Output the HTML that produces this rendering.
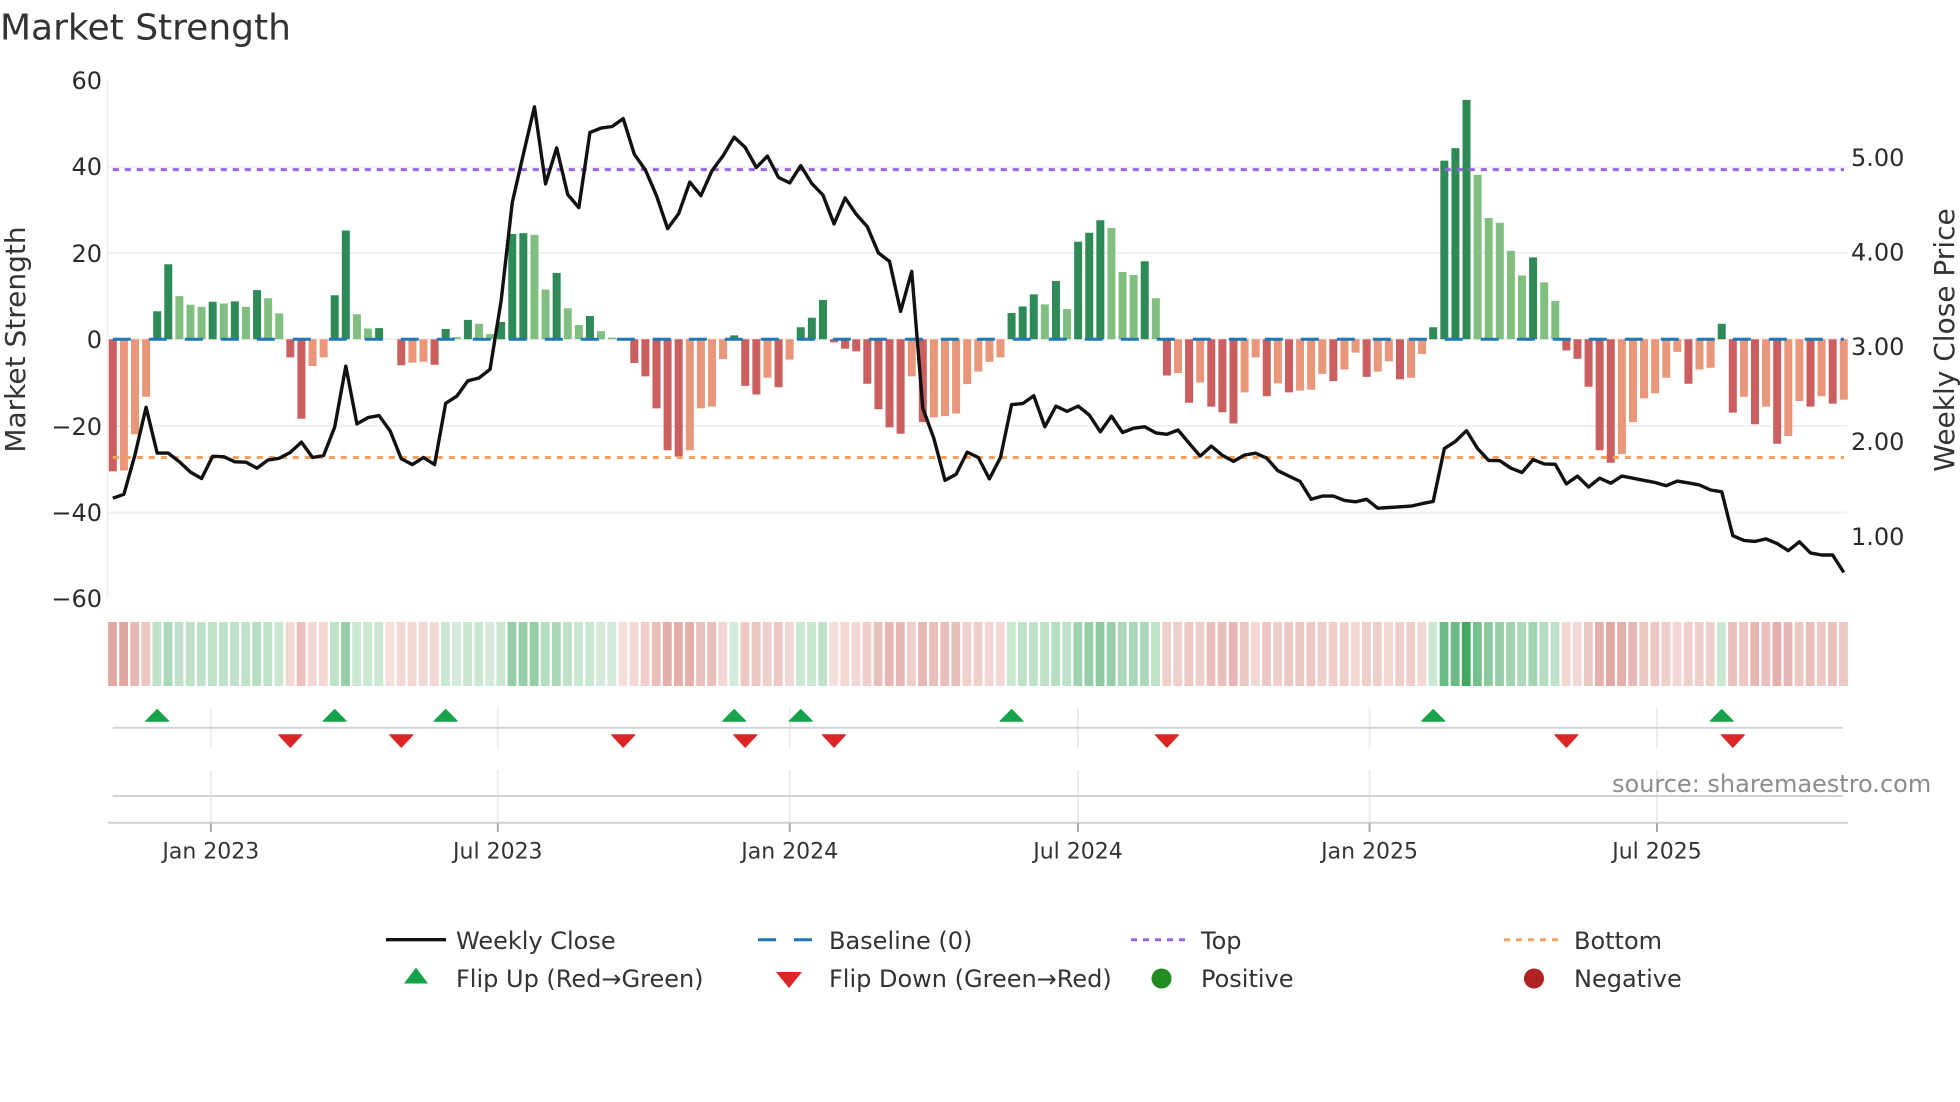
<!DOCTYPE html>
<html lang="en">
<head>
<meta charset="utf-8">
<title>Market Strength</title>
<style>
html,body{margin:0;padding:0;background:#fff;width:1960px;height:1102px;overflow:hidden}
svg{display:block}
text{font-family:"DejaVu Sans","Liberation Sans",sans-serif}
.n{vector-effect:non-scaling-stroke;fill:none}
.s path{stroke-width:8.8;vector-effect:non-scaling-stroke;fill:none}
</style>
</head>
<body>
<svg width="1960" height="1102" viewBox="0 0 1960 1102" xmlns="http://www.w3.org/2000/svg">
<defs>
<path id="u" d="M-11.5 721.2H11.5L0 709.5Z" fill="#16a34a" stroke="#16a34a" stroke-width="1.2" stroke-linejoin="round"/>
<path id="d" d="M-11.5 734.8H11.5L0 747.2Z" fill="#dc2626" stroke="#dc2626" stroke-width="1.2" stroke-linejoin="round"/>
</defs>
<rect width="1960" height="1102" fill="#fff"/>

<text x="0" y="39.5" font-size="36" fill="#333">Market Strength</text>

<!-- main grid -->
<g stroke="#f0f0f2" stroke-width="2" fill="none">
<path d="M107.5 80V598"/>
<path d="M108 167H1847M108 253H1847M108 339.3H1847M108 426H1847M108 512.5H1847"/>
</g>

<!-- strength bars -->
<g transform="translate(112.8,339.3) scale(11.096,-4.315)" stroke-width="8">
<path class="n" stroke="#2e8b57" d="M4 0V6.5M5 0V17.4M9 0V8.7M11 0V8.8M13 0V11.4M20 0V10.2M21 0V25.2M24 0V2.6M30 0V2.4M32 0V4.5M35 0V4M36 0V24.4M37 0V24.6M40 0V15.4M43 0V5.4M56 0V.9M62 0V2.8M63 0V5M64 0V9.1M81 0V6.1M82 0V7.6M83 0V10.4M85 0V13.5M87 0V22.6M88 0V24.7M89 0V27.6M93 0V18.1M119 0V2.8M120 0V41.4M121 0V44.3M122 0V55.5M128 0V19M145 0V3.6"/>
<path class="n" stroke="#81bf80" d="M6 0V10M7 0V8M8 0V7.5M10 0V8.3M12 0V7.5M14 0V9.5M15 0V6M22 0V5.8M23 0V2.5M31 0V.5M33 0V3.6M34 0V1.2M38 0V24.2M39 0V11.5M41 0V7.2M42 0V3.3M44 0V1.9M45 0V.4M84 0V8.1M86 0V7M90 0V25.8M91 0V15.6M92 0V14.9M94 0V9.5M123 0V38.1M124 0V28.1M125 0V27M126 0V20.5M127 0V14.8M129 0V13.2M130 0V8.9"/>
<path class="n" stroke="#cb5f5f" d="M0 0V-30.6M16 0V-4.2M17 0V-18.4M26 0V-6M29 0V-5.9M47 0V-5.5M48 0V-8.6M49 0V-16M50 0V-25.7M51 0V-27.2M57 0V-10.8M58 0V-12.8M60 0V-11.1M65 0V-.7M66 0V-2.2M67 0V-2.8M68 0V-10.3M69 0V-16.2M70 0V-20.4M71 0V-21.9M73 0V-19.2M95 0V-8.4M97 0V-14.7M99 0V-15.6M100 0V-16.9M101 0V-19.5M104 0V-13.2M106 0V-12.3M110 0V-9.7M113 0V-8.7M116 0V-9.3M131 0V-2.6M132 0V-4.5M133 0V-11M134 0V-25.7M135 0V-28.6M142 0V-10.3M146 0V-17M148 0V-19.7M150 0V-24.2M153 0V-15.6M155 0V-14.9"/>
<path class="n" stroke="#e9967a" d="M1 0V-30.4M2 0V-22M3 0V-13.3M18 0V-6.2M19 0V-4.2M27 0V-5.4M28 0V-5.2M46 0V-.3M52 0V-25.7M53 0V-16M54 0V-15.6M55 0V-4.6M59 0V-8.9M61 0V-4.7M72 0V-8.6M74 0V-18.1M75 0V-17.8M76 0V-17.2M77 0V-10.4M78 0V-7.5M79 0V-5.2M80 0V-4.2M96 0V-7.8M98 0V-10M102 0V-12.3M103 0V-4.2M105 0V-10.2M107 0V-11.9M108 0V-11.7M109 0V-8M111 0V-7M112 0V-3.1M114 0V-7.5M115 0V-5.1M117 0V-8.9M118 0V-3.4M136 0V-26.6M137 0V-19.2M138 0V-13.7M139 0V-12.5M140 0V-8.9M141 0V-2.9M143 0V-7M144 0V-6.6M147 0V-13.3M149 0V-15.6M151 0V-22.4M152 0V-14.3M154 0V-13.2M156 0V-14"/>
</g>

<!-- reference lines -->
<path d="M112.8 339.3H1844" stroke="#1f77b4" stroke-width="3" stroke-dasharray="18 18" fill="none"/>
<path d="M112.8 169.6H1844" stroke="#9b62e2" stroke-width="3" stroke-dasharray="6 6" fill="none"/>
<path d="M112.8 457.5H1844" stroke="#f4a261" stroke-width="3" stroke-dasharray="6 6" fill="none"/>

<!-- price line -->
<g transform="translate(112.8,0) scale(11.096,1)">
<polyline class="n" stroke="#111" stroke-width="3.4" stroke-linejoin="round" points="0,498.2 1,494.3 2,454.7 3,407.3 4,453.1 5,453.1 6,461.8 7,472.1 8,478.5 9,456.3 10,456.7 11,461.8 12,462.2 13,468.2 14,459.9 15,458.3 16,452.4 17,442.1 18,457.5 19,455.5 20,427 21,366.2 22,423.9 23,417.6 24,415.6 25,431 26,458.7 27,464.6 28,457.5 29,464.6 30,403.3 31,396.2 32,380.8 33,378 34,369.3 35,300.5 36,202.5 37,154.2 38,106.8 39,183.9 40,147.9 41,194.5 42,207.6 43,132.5 44,128.1 45,126.5 46,118.6 47,154.2 48,170 49,195.7 50,228.6 51,213.6 52,182.1 53,195.7 54,170.7 55,155.7 56,137.1 57,147.5 58,167.5 59,156.1 60,177.5 61,182.9 62,165.7 63,183.6 64,195 65,223.9 66,197.9 67,214.3 68,226.8 69,252.9 70,261.4 71,311.4 72,271.4 73,408.2 74,438.6 75,480.4 76,474.3 77,452.1 78,457.5 79,478.9 80,457.5 81,404.6 82,403.6 83,395.7 84,426.8 85,406.1 86,411.4 87,406.1 88,415 89,431.8 90,416.1 91,432.5 92,428.2 93,426.8 94,432.9 95,434.3 96,430 97,443.2 98,456.1 99,446.1 100,455.4 101,461.4 102,455 103,453.2 104,458.2 105,470.7 106,476.1 107,481.4 108,499.3 109,496.1 110,496.1 111,500.4 112,501.8 113,499.3 114,508.2 115,507.5 116,506.8 117,506.1 118,503.6 119,501.4 120,448.6 121,441.4 122,430.7 123,448.6 124,460.4 125,460.7 126,468.2 127,472.5 128,459.6 129,463.9 130,464.3 131,483.9 132,476.1 133,487.1 134,478.2 135,483.2 136,476.1 137,478.2 138,480.4 139,482.5 140,485.7 141,481.1 142,482.9 143,485 144,490 145,491.8 146,535.7 147,540.4 148,541.4 149,538.9 150,543.6 151,550.7 152,541.8 153,552.9 154,555 155,555 156,572.5"/>
</g>

<!-- y axis labels -->
<g font-size="24" fill="#2b2b2b" text-anchor="end">
<text x="102" y="89">60</text>
<text x="102" y="175">40</text>
<text x="102" y="262">20</text>
<text x="102" y="348">0</text>
<text x="102" y="435">−20</text>
<text x="102" y="521">−40</text>
<text x="102" y="607">−60</text>
</g>
<g font-size="24" fill="#2b2b2b">
<text x="1851" y="166">5.00</text>
<text x="1851" y="260.5">4.00</text>
<text x="1851" y="355">3.00</text>
<text x="1851" y="450">2.00</text>
<text x="1851" y="545">1.00</text>
</g>
<text transform="translate(25,339.5) rotate(-90)" font-size="28" fill="#333" text-anchor="middle">Market Strength</text>
<text transform="translate(1954,340) rotate(-90)" font-size="28" fill="#333" text-anchor="middle">Weekly Close Price</text>

<!-- heat strip -->
<g class="s" transform="translate(112.5,622) scale(11.096,1)">
<g stroke="#1a9641" opacity=".92">
<path stroke-opacity=".2" d="M31 0V64M34 0V64M44 0V64M45 0V64M56 0V64"/>
<path stroke-opacity=".25" d="M15 0V64M22 0V64M23 0V64M24 0V64M30 0V64M32 0V64M33 0V64M35 0V64M42 0V64M43 0V64M62 0V64M63 0V64M81 0V64M119 0V64M145 0V64"/>
<path stroke-opacity=".3" d="M4 0V64M6 0V64M7 0V64M8 0V64M9 0V64M10 0V64M11 0V64M12 0V64M14 0V64M20 0V64M41 0V64M64 0V64M82 0V64M83 0V64M84 0V64M86 0V64M94 0V64M130 0V64"/>
<path stroke-opacity=".35" d="M13 0V64M39 0V64M85 0V64M129 0V64"/>
<path stroke-opacity=".4" d="M5 0V64M40 0V64M91 0V64M92 0V64M93 0V64M127 0V64"/>
<path stroke-opacity=".45" d="M87 0V64M126 0V64M128 0V64"/>
<path stroke-opacity=".5" d="M21 0V64M36 0V64M37 0V64M38 0V64M88 0V64M90 0V64M125 0V64"/>
<path stroke-opacity=".55" d="M89 0V64M124 0V64"/>
<path stroke-opacity=".65" d="M123 0V64"/>
<path stroke-opacity=".7" d="M120 0V64M121 0V64"/>
<path stroke-opacity=".9" d="M122 0V64"/>
</g>
<g stroke="#be3c32" opacity=".82">
<path stroke-opacity=".2" d="M25 0V64M46 0V64M65 0V64"/>
<path stroke-opacity=".25" d="M16 0V64M18 0V64M19 0V64M26 0V64M27 0V64M28 0V64M29 0V64M47 0V64M55 0V64M61 0V64M66 0V64M67 0V64M79 0V64M80 0V64M103 0V64M112 0V64M115 0V64M118 0V64M131 0V64M132 0V64M141 0V64"/>
<path stroke-opacity=".3" d="M48 0V64M59 0V64M68 0V64M72 0V64M77 0V64M78 0V64M95 0V64M96 0V64M98 0V64M105 0V64M109 0V64M110 0V64M111 0V64M113 0V64M114 0V64M116 0V64M117 0V64M140 0V64M142 0V64M143 0V64M144 0V64"/>
<path stroke-opacity=".35" d="M3 0V64M57 0V64M58 0V64M60 0V64M97 0V64M102 0V64M104 0V64M106 0V64M107 0V64M108 0V64M133 0V64M138 0V64M139 0V64M147 0V64M152 0V64M154 0V64M156 0V64"/>
<path stroke-opacity=".4" d="M17 0V64M49 0V64M53 0V64M54 0V64M69 0V64M74 0V64M75 0V64M76 0V64M99 0V64M100 0V64M146 0V64M149 0V64M153 0V64M155 0V64"/>
<path stroke-opacity=".45" d="M2 0V64M70 0V64M71 0V64M73 0V64M101 0V64M137 0V64M148 0V64M151 0V64"/>
<path stroke-opacity=".5" d="M50 0V64M51 0V64M52 0V64M134 0V64M136 0V64M150 0V64"/>
<path stroke-opacity=".55" d="M0 0V64M1 0V64M135 0V64"/>
</g>
</g>

<!-- timeline grid -->
<g stroke="#ececf0" stroke-width="2" fill="none">
<path d="M210.8 708V748M497.8 708V748M789.7 708V748M1078 708V748M1369.6 708V748M1657 708V748"/>
<path d="M210.8 770V822M497.8 770V822M789.7 770V822M1078 770V822M1369.6 770V822M1657 770V822"/>
</g>
<path d="M112.7 727.7H1843M112.7 796H1843" stroke="#d3d3d6" stroke-width="2" fill="none"/>
<path d="M108 822.7H1848" stroke="#cfcfd2" stroke-width="2" fill="none"/>
<path d="M210.8 823V832M497.8 823V832M789.7 823V832M1078 823V832M1369.6 823V832M1657 823V832" stroke="#a8a8a8" stroke-width="2" fill="none"/>

<!-- flip markers -->
<use href="#u" x="157.2"/><use href="#u" x="334.7"/><use href="#u" x="445.7"/><use href="#u" x="734.2"/><use href="#u" x="800.8"/><use href="#u" x="1011.6"/><use href="#u" x="1433.2"/><use href="#u" x="1721.7"/>
<use href="#d" x="290.3"/><use href="#d" x="401.3"/><use href="#d" x="623.2"/><use href="#d" x="745.3"/><use href="#d" x="834"/><use href="#d" x="1166.9"/><use href="#d" x="1566.4"/><use href="#d" x="1732.8"/>

<!-- x labels -->
<g font-size="22" fill="#333" text-anchor="middle">
<text x="210.8" y="858.5">Jan 2023</text>
<text x="497.8" y="858.5">Jul 2023</text>
<text x="789.7" y="858.5">Jan 2024</text>
<text x="1078" y="858.5">Jul 2024</text>
<text x="1369.6" y="858.5">Jan 2025</text>
<text x="1657" y="858.5">Jul 2025</text>
</g>

<text x="1612" y="792" font-size="24" fill="#8c8c8c">source: sharemaestro.com</text>

<!-- legend -->
<path d="M386 939.7H446" stroke="#111" stroke-width="3.4" fill="none"/>
<path d="M758 939.7H813.6" stroke="#1f77b4" stroke-width="3" stroke-dasharray="18 18" fill="none"/>
<path d="M1131 939.7H1187" stroke="#9b62e2" stroke-width="3" stroke-dasharray="6 6" fill="none"/>
<path d="M1504 939.7H1560" stroke="#f4a261" stroke-width="3" stroke-dasharray="6 6" fill="none"/>
<path d="M404 983.5H428L416 967.5Z" fill="#16a34a"/>
<path d="M776 972H802L789 988Z" fill="#dc2626"/>
<circle cx="1161.5" cy="978.5" r="10" fill="#228b22"/>
<circle cx="1534" cy="978.5" r="10" fill="#b22222"/>
<g font-size="24" fill="#333">
<text x="456" y="949">Weekly Close</text>
<text x="829" y="949">Baseline (0)</text>
<text x="1201" y="949">Top</text>
<text x="1574" y="949">Bottom</text>
<text x="456" y="987">Flip Up (Red→Green)</text>
<text x="829" y="987">Flip Down (Green→Red)</text>
<text x="1201" y="987">Positive</text>
<text x="1574" y="987">Negative</text>
</g>
</svg>
</body>
</html>
